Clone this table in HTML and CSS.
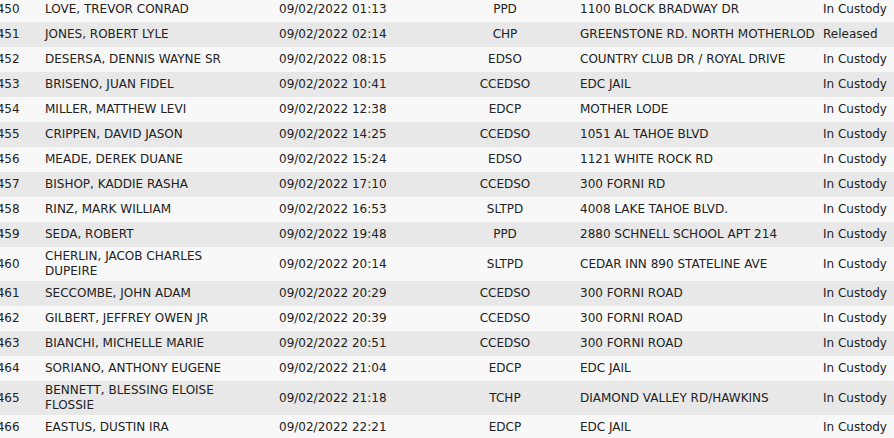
FILE: index.html
```html
<!DOCTYPE html>
<html lang="en">
<head>
<meta charset="utf-8">
<title>Bookings</title>
<link rel="stylesheet" href="styles.css">
</head>
<body>
<table class="log">
  <colgroup>
    <col class="c-num"><col class="c-name"><col class="c-date"><col class="c-agency"><col class="c-loc"><col class="c-status">
  </colgroup>
  <tbody>
    <tr><td>4450</td><td class="name">LOVE, TREVOR CONRAD</td><td>09/02/2022 01:13</td><td class="agency">PPD</td><td class="loc">1100 BLOCK BRADWAY DR</td><td>In Custody</td></tr>
    <tr><td>4451</td><td class="name">JONES, ROBERT LYLE</td><td>09/02/2022 02:14</td><td class="agency">CHP</td><td class="loc">GREENSTONE RD. NORTH MOTHERLOD</td><td>Released</td></tr>
    <tr><td>4452</td><td class="name">DESERSA, DENNIS WAYNE SR</td><td>09/02/2022 08:15</td><td class="agency">EDSO</td><td class="loc">COUNTRY CLUB DR / ROYAL DRIVE</td><td>In Custody</td></tr>
    <tr><td>4453</td><td class="name">BRISENO, JUAN FIDEL</td><td>09/02/2022 10:41</td><td class="agency">CCEDSO</td><td class="loc">EDC JAIL</td><td>In Custody</td></tr>
    <tr><td>4454</td><td class="name">MILLER, MATTHEW LEVI</td><td>09/02/2022 12:38</td><td class="agency">EDCP</td><td class="loc">MOTHER LODE</td><td>In Custody</td></tr>
    <tr><td>4455</td><td class="name">CRIPPEN, DAVID JASON</td><td>09/02/2022 14:25</td><td class="agency">CCEDSO</td><td class="loc">1051 AL TAHOE BLVD</td><td>In Custody</td></tr>
    <tr><td>4456</td><td class="name">MEADE, DEREK DUANE</td><td>09/02/2022 15:24</td><td class="agency">EDSO</td><td class="loc">1121 WHITE ROCK RD</td><td>In Custody</td></tr>
    <tr><td>4457</td><td class="name">BISHOP, KADDIE RASHA</td><td>09/02/2022 17:10</td><td class="agency">CCEDSO</td><td class="loc">300 FORNI RD</td><td>In Custody</td></tr>
    <tr><td>4458</td><td class="name">RINZ, MARK WILLIAM</td><td>09/02/2022 16:53</td><td class="agency">SLTPD</td><td class="loc">4008 LAKE TAHOE BLVD.</td><td>In Custody</td></tr>
    <tr><td>4459</td><td class="name">SEDA, ROBERT</td><td>09/02/2022 19:48</td><td class="agency">PPD</td><td class="loc">2880 SCHNELL SCHOOL APT 214</td><td>In Custody</td></tr>
    <tr><td>4460</td><td class="name">CHERLIN, JACOB CHARLES DUPEIRE</td><td>09/02/2022 20:14</td><td class="agency">SLTPD</td><td class="loc">CEDAR INN 890 STATELINE AVE</td><td>In Custody</td></tr>
    <tr><td>4461</td><td class="name">SECCOMBE, JOHN ADAM</td><td>09/02/2022 20:29</td><td class="agency">CCEDSO</td><td class="loc">300 FORNI ROAD</td><td>In Custody</td></tr>
    <tr><td>4462</td><td class="name">GILBERT, JEFFREY OWEN JR</td><td>09/02/2022 20:39</td><td class="agency">CCEDSO</td><td class="loc">300 FORNI ROAD</td><td>In Custody</td></tr>
    <tr><td>4463</td><td class="name">BIANCHI, MICHELLE MARIE</td><td>09/02/2022 20:51</td><td class="agency">CCEDSO</td><td class="loc">300 FORNI ROAD</td><td>In Custody</td></tr>
    <tr><td>4464</td><td class="name">SORIANO, ANTHONY EUGENE</td><td>09/02/2022 21:04</td><td class="agency">EDCP</td><td class="loc">EDC JAIL</td><td>In Custody</td></tr>
    <tr><td>4465</td><td class="name">BENNETT, BLESSING ELOISE FLOSSIE</td><td>09/02/2022 21:18</td><td class="agency">TCHP</td><td class="loc">DIAMOND VALLEY RD/HAWKINS</td><td>In Custody</td></tr>
    <tr><td>4466</td><td class="name">EASTUS, DUSTIN IRA</td><td>09/02/2022 22:21</td><td class="agency">EDCP</td><td class="loc">EDC JAIL</td><td>In Custody</td></tr>
  </tbody>
</table>
</body>
</html>
```
FILE: styles.css
```css
html, body {
  margin: 0;
  padding: 0;
  overflow: hidden;
  background: #ffffff;
}

.log {
  border-collapse: collapse;
  table-layout: fixed;
  width: 934px;
  margin: -3px 0 0 -19px;
  font-family: "DejaVu Sans", Verdana, sans-serif;
  font-size: 12px;
  line-height: 15px;
  color: #222222;
}

.c-num { width: 56px; }
.c-name { width: 234px; }
.c-date { width: 167px; }
.c-agency { width: 134px; }
.c-loc { width: 243px; }
.c-status { width: 100px; }

.log tr {
  height: 25px;
  background: #f8f8f8;
}

.log tr:nth-child(even) {
  background: #e8e8e8;
}

.log td {
  padding: 2px 8px;
  vertical-align: middle;
  text-align: left;
}

.log td.name {
  padding-right: 34px;
}

.log td.agency {
  text-align: center;
}

.log td.loc {
  white-space: nowrap;
}
```
